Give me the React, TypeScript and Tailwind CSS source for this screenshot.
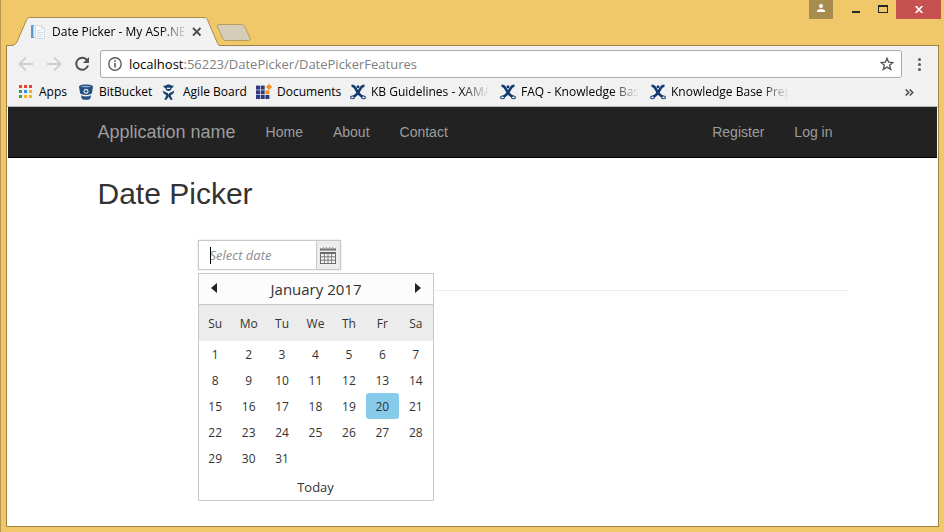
import { useState } from "react";
import type { ReactNode } from "react";

const UI = "font-['Open_Sans','Noto_Sans',sans-serif]";
const WEEKDAYS = ["Su", "Mo", "Tu", "We", "Th", "Fr", "Sa"];
const WEEKS = [0, 1, 2, 3, 4].map((w) =>
  [1, 2, 3, 4, 5, 6, 7].map((d) => w * 7 + d)
);

function AppsIcon() {
  const colors = ["#ea4335", "#ea4335", "#ea4335", "#34a065", "#2f8bf2", "#f7b30f", "#34a065", "#f7b30f", "#f7b30f"];
  return (
    <svg width="16" height="16" viewBox="0 0 16 16" aria-hidden="true">
      {colors.map((c, i) => (
        <rect key={i} x={1 + (i % 3) * 5} y={1 + Math.floor(i / 3) * 5} width="3" height="3" fill={c} />
      ))}
    </svg>
  );
}

function BucketIcon() {
  return (
    <svg width="16" height="16" viewBox="0 0 16 16" aria-hidden="true">
      <path d="M1 2.6C1 1.2 4 .4 8 .4s7 .8 7 2.2L13.9 9c-.1.8-2.600 2-5.900 2s-5.800-1.200-5.900-2z" fill="#205081" />
      <path d="M3 11.200c1.400.8 3 1.200 5 1.200s3.600-.4 5-1.200l-.6 3c-.3 1-2.200 1.600-4.400 1.600s-4.100-.6-4.400-1.600z" fill="#205081" />
      <ellipse cx="8" cy="2.500" rx="5" ry=".8" fill="#8fa8c0" />
      <circle cx="8" cy="7.300" r="2.500" fill="#dfe7ef" />
      <circle cx="8" cy="7.300" r="1.300" fill="#205081" />
    </svg>
  );
}

function AgileIcon() {
  return (
    <svg width="16" height="16" viewBox="0 0 16 16" aria-hidden="true">
      <path d="M1.200 1.500c1.800.5 2.700.2 3.200-.5.500-.7 3.700-.7 4.200 0 .5.700 1.400 1 3.200.5-.3 1.700-1.100 2.400-2.100 2.600C9.400 5.900 8.200 7 6.500 7S3.600 5.900 3.300 4.100c-1-.2-1.800-.9-2.100-2.600z" fill="#173f6d" />
      <path d="M4.700 4.300h3.600" stroke="#f1f1f1" strokeWidth="1.200" />
      <path d="M.8 6.800 6.500 9.400l5.700-2.600-.5 2.200L8.600 11.400l2.200 4.300H8.400L6.500 12.600 4.600 15.700H2.200l2.200-4.300L1.300 9z" fill="#173f6d" />
      <path d="M6.500 8v2.200" stroke="#f1f1f1" strokeWidth="1" />
    </svg>
  );
}

function DocumentsIcon() {
  return (
    <svg width="17" height="16" viewBox="0 0 17 16" aria-hidden="true">
      {[0, 1, 2].flatMap((r) =>
        [0, 1, 2].map((c) =>
          r === 0 && c === 2 ? null : (
            <rect key={`${r}${c}`} x={c * 4.700} y={1.600 + r * 4.700} width="4" height="4" fill={r === 1 && c === 2 ? "#f6931e" : "#2e3a80"} />
          )
        )
      )}
      <rect x="10.800" y=".8" width="4.400" height="4.400" fill="#f6931e" transform="rotate(45 13 3)" />
    </svg>
  );
}

function ConfluenceIcon() {
  return (
    <svg width="16" height="16" viewBox="0 0 16 16" aria-hidden="true">
      <path d="M1.500 1.800c2 0 2.900.6 4 2.700C7.200 7.800 9 11.600 13 12.800" fill="none" stroke="#123a6f" strokeWidth="2.600" />
      <path d="M14.500 1.800c-2 0-2.900.6-4 2.700C8.800 7.800 7 11.600 3 12.800" fill="none" stroke="#123a6f" strokeWidth="2.600" />
      <circle cx="8" cy="2.800" r="1.500" fill="#123a6f" />
      <ellipse cx="2.500" cy="13.400" rx="1.900" ry="1.400" fill="#f1f1f1" stroke="#123a6f" strokeWidth="1.100" />
      <ellipse cx="13.500" cy="13.400" rx="1.900" ry="1.400" fill="#f1f1f1" stroke="#123a6f" strokeWidth="1.100" />
    </svg>
  );
}

function PageIcon() {
  return (
    <svg width="16" height="16" viewBox="0 0 16 16" aria-hidden="true">
      <rect x="1" y="1" width="3" height="13" fill="#5b9bd0" />
      <rect x="3" y="2" width="1" height="11" fill="#a8d0ee" />
      <path d="M5.500 1.500h6l3 3v10h-9z" fill="#f8f9fb" stroke="#d3dae2" />
      <path d="M11.500 1.500v3h3" fill="none" stroke="#d3dae2" />
      <path d="M7 6.500h4M7 8.500h6M7 10.500h6M7 12.500h5" stroke="#d5dce4" />
    </svg>
  );
}

function CalendarIcon() {
  return (
    <svg width="16" height="17" viewBox="0 0 16 17" aria-hidden="true">
      <path d="M0 2.500h16" stroke="#6b6b6b" strokeWidth="2" />
      <path d="M3.500 0v3M6.500 0v3M9.500 0v3M12.500 0v3" stroke="#9a9a9a" />
      <rect x="0" y="5" width="16" height="12" fill="#6b6b6b" />
      {[0, 1, 2].flatMap((r) =>
        [0, 1, 2, 3].map((c) => (
          <rect key={`${r}${c}`} x={1 + c * 3.700} y={7 + r * 3.300} width="2.900" height="2.400" fill="#f6f6f6" />
        ))
      )}
    </svg>
  );
}

function Bookmark({ icon, width, fade = false, children }: { icon: ReactNode; width: string; fade?: boolean; children: ReactNode }) {
  return (
    <a href="#" className={`flex shrink-0 items-center gap-[5px] text-black ${width}`}>
      <span className="w-4 shrink-0">{icon}</span>
      <span
        className={`whitespace-nowrap ${
          fade ? "[mask-image:linear-gradient(to_right,black_90px,transparent_118px)]" : ""
        }`}
      >
        {children}
      </span>
    </a>
  );
}

function TitleBar() {
  return (
    <header className="flex h-[45px] items-start justify-between">
      <div className="flex items-start pt-[17px] pl-[3px]">
        <div className="relative z-10 flex h-[29px] w-[212px] items-center pr-[19px] pl-[21px]">
          <svg className="absolute inset-0" width="212" height="29" viewBox="0 0 212 29" aria-hidden="true">
            <path d="M0 29C4 29 6 28 8 25L17 4C18 1.500 19 .5 21 .5H195C197 .5 198 1.500 199 4L208 25C209 28 210 29 212 29Z" fill="#f1f1f1" />
            <path d="M0 28.500C4 28.500 6 28 8 25L17 4C18 1.500 19 .5 21 .5H195C197 .5 198 1.500 199 4L208 25C209 28 210 28.500 212 28.500" fill="none" stroke="#a98b4b" />
          </svg>
          <span className="relative"><PageIcon /></span>
          <span className="relative ml-[6px] w-[132px] text-xs whitespace-nowrap text-black [mask-image:linear-gradient(to_right,black_108px,transparent_136px)]">
            Date Picker - My ASP.NE
          </span>
          <button type="button" aria-label="Close tab" className="relative ml-2">
            <svg width="10" height="10" viewBox="0 0 10 10" aria-hidden="true">
              <path d="M1 1l7.500 7.500M8.500 1 1 8.500" stroke="#4d4d4d" strokeWidth="1.800" />
            </svg>
          </button>
        </div>
        <button type="button" aria-label="New tab" className="-ml-[5px] mt-[7px]">
          <svg width="36" height="18" viewBox="0 0 36 18" aria-hidden="true">
            <path d="M3 .5H25C27 .5 28 1 28.700 2.500L34 14c.6 1.700 0 2.500-1.500 2.500H10C8.500 16.500 7.500 16 6.800 14.500L1.500 3C.9 1.500 1.500.5 3 .5Z" fill="#d6cdb8" stroke="#b99c5e" />
          </svg>
        </button>
      </div>
      <div className="flex h-[19px] items-stretch pr-[3px]">
        <button type="button" aria-label="Profile" className="flex w-6 justify-center bg-[#a88c4d] pt-1">
          <svg width="8" height="8" viewBox="0 0 8 8" aria-hidden="true">
            <circle cx="4" cy="2" r="2" fill="#fff" />
            <path d="M0 8V6.500Q1 5 4 5t4 1.500V8z" fill="#fff" />
          </svg>
        </button>
        <button type="button" aria-label="Minimize" className="ml-[19px] flex w-[10px] items-start pt-[11px]">
          <span className="h-[2px] w-2 bg-[#262626]" />
        </button>
        <button type="button" aria-label="Maximize" className="ml-4 flex w-[18px] items-start pt-[5px]">
          <span className="h-2 w-[10px] border border-t-2 border-[#262626]" />
        </button>
        <button type="button" aria-label="Close" className="flex w-[45px] items-center justify-center bg-[#c75050]">
          <svg width="8" height="7" viewBox="0 0 8 7" aria-hidden="true">
            <path d="M.7 0 7.300 7M7.300 0 .7 7" stroke="#fff" strokeWidth="1.700" />
          </svg>
        </button>
      </div>
    </header>
  );
}

function Toolbar() {
  return (
    <div className="border-t border-[#a08245] bg-[#f1f1f1]">
      <div className="flex items-center pt-1 pr-4 pl-[11px]">
        <div className="flex w-[82px] gap-3">
          <button type="button" aria-label="Back">
            <svg width="16" height="16" viewBox="0 0 16 16" aria-hidden="true">
              <path d="M15 8H2M8 1.500 1.500 8 8 14.500" fill="none" stroke="#cfcfcf" strokeWidth="1.800" />
            </svg>
          </button>
          <button type="button" aria-label="Forward">
            <svg width="16" height="16" viewBox="0 0 16 16" aria-hidden="true">
              <path d="M1 8h13M8 1.500 14.500 8 8 14.500" fill="none" stroke="#cfcfcf" strokeWidth="1.800" />
            </svg>
          </button>
          <button type="button" aria-label="Reload">
            <svg width="16" height="16" viewBox="0 0 16 16" aria-hidden="true">
              <path d="M13.300 4.500A6 6 0 1 0 14 9.500" fill="none" stroke="#505050" strokeWidth="2" />
              <path d="M15 1v6H9z" fill="#505050" />
            </svg>
          </button>
        </div>
        <div className="flex h-7 flex-1 items-center rounded-[3px] border border-[#a9a9a9] bg-white px-[7px] text-[13px] text-black">
          <button type="button" aria-label="Site information">
            <svg width="14" height="14" viewBox="0 0 14 14" aria-hidden="true">
              <circle cx="7" cy="7" r="6.200" fill="none" stroke="#5a5a5a" strokeWidth="1.400" />
              <path d="M7 6v4.500M7 3.200v1.700" stroke="#5a5a5a" strokeWidth="1.600" />
            </svg>
          </button>
          <label htmlFor="address" className="ml-[7px] pt-[2px]">localhost</label>
          <input id="address" type="text" defaultValue=":56223/DatePicker/DatePickerFeatures" className="min-w-0 flex-1 pt-[2px] text-[#808080] outline-none" />
          <button type="button" aria-label="Bookmark this page">
            <svg width="14" height="14" viewBox="0 0 14 14" aria-hidden="true">
              <path d="M7 1.300 8.600 5.200l4.300.3-3.300 2.700 1.100 4.200L7 10.100l-3.700 2.300 1.100-4.200L1.100 5.500l4.300-.3z" fill="none" stroke="#5a5a5a" strokeWidth="1.400" />
            </svg>
          </button>
        </div>
        <button type="button" aria-label="Menu" className="ml-4 flex w-1 flex-col gap-[2px]">
          <span className="size-[3px] rounded-full bg-[#5a5a5a]" />
          <span className="size-[3px] rounded-full bg-[#5a5a5a]" />
          <span className="size-[3px] rounded-full bg-[#5a5a5a]" />
        </button>
      </div>
      <nav aria-label="Bookmarks" className="flex h-[29px] items-center border-b border-[#b4b8b6] pr-6 pl-[11px] text-xs">
        <Bookmark icon={<AppsIcon />} width="w-[60px]">Apps</Bookmark>
        <Bookmark icon={<BucketIcon />} width="w-[84px]">BitBucket</Bookmark>
        <Bookmark icon={<AgileIcon />} width="w-[94px]">Agile Board</Bookmark>
        <Bookmark icon={<DocumentsIcon />} width="w-[94px]">Documents</Bookmark>
        <Bookmark icon={<ConfluenceIcon />} width="w-[150px]" fade>KB Guidelines - XAMA</Bookmark>
        <Bookmark icon={<ConfluenceIcon />} width="w-[150px]" fade>FAQ - Knowledge Bas</Bookmark>
        <Bookmark icon={<ConfluenceIcon />} width="w-[150px]" fade>Knowledge Base Prepa</Bookmark>
        <button type="button" aria-label="More bookmarks" className="ml-auto">
          <svg width="9" height="7" viewBox="0 0 9 7" aria-hidden="true">
            <path d="M.7.5 3.700 3.500.7 6.500M4.700.5l3 3-3 3" fill="none" stroke="#505050" strokeWidth="1.600" />
          </svg>
        </button>
      </nav>
    </div>
  );
}

function NavBar() {
  return (
    <nav aria-label="Main" className="mx-px border-b border-black bg-[#222]">
      <div className="mx-auto flex h-[50px] max-w-[750px] items-center gap-[30px] text-sm text-[#9d9d9d]">
        <a href="#" className="text-lg">Application name</a>
        <a href="#">Home</a>
        <a href="#">About</a>
        <a href="#">Contact</a>
        <a href="#" className="ml-auto">Register</a>
        <a href="#" className="pr-[15px]">Log in</a>
      </div>
    </nav>
  );
}

function Calendar({ selected, onSelect }: { selected: number; onSelect: (day: number) => void }) {
  return (
    <div className="absolute top-full -left-px z-10 mt-1 w-[236px] border border-[#c8c8c8] bg-white text-[#333]">
      <div className="flex h-[31px] items-center justify-between border-b border-[#c8c8c8] bg-[#fcfcfc] pr-[11px] pl-3">
        <button type="button" aria-label="Previous month">
          <svg width="6" height="10" viewBox="0 0 6 10" className="mb-[2px]" aria-hidden="true"><path d="M6 0v10L0 5z" fill="#222" /></svg>
        </button>
        <span className="text-[15px]">January 2017</span>
        <button type="button" aria-label="Next month">
          <svg width="6" height="10" viewBox="0 0 6 10" className="mb-[2px]" aria-hidden="true"><path d="M0 0v10l6-5z" fill="#222" /></svg>
        </button>
      </div>
      <table className="w-full table-fixed text-center text-xs">
        <thead>
          <tr className="h-9 bg-[#ececec]">
            {WEEKDAYS.map((d) => (
              <th key={d} scope="col" className="pt-[2px] font-normal">{d}</th>
            ))}
          </tr>
        </thead>
        <tbody>
          {WEEKS.map((week) => (
            <tr key={week[0]} className="h-[26px]">
              {week.map((day) => (
                <td key={day} className="p-0">
                  {day <= 31 && (
                    <button
                      type="button"
                      onClick={() => onSelect(day)}
                      className={`block h-[26px] w-full pt-[2px] ${day === selected ? "rounded-[3px] bg-[#86cbea]" : ""}`}
                    >
                      {day}
                    </button>
                  )}
                </td>
              ))}
            </tr>
          ))}
        </tbody>
      </table>
      <button type="button" onClick={() => onSelect(20)} className="block h-[29px] w-full pt-1 text-[13px]">
        Today
      </button>
    </div>
  );
}

export default function App() {
  const [day, setDay] = useState(20);
  return (
    <div className={`flex min-h-screen flex-col border-l border-[#b8974f] bg-[#f0c869] pr-[5px] pb-[5px] pl-[5px] text-black ${UI}`}>
      <div className="-mr-[5px]"><TitleBar /></div>
      <div className="flex flex-1 flex-col border-x border-b border-[#a08245] bg-white">
        <Toolbar />
        <main className="font-['Liberation_Sans',Arial,sans-serif]">
          <NavBar />
          <div className="mx-auto max-w-[750px]">
            <h2 className="mt-[19px] text-[30px] leading-[33px] text-[#333]">Date Picker</h2>
            <div className={`mt-[30px] ml-[100px] ${UI}`}>
              <div className="relative flex h-[30px] w-[143px] border border-[#c8c8c8] bg-white shadow-[0_0_2px_#ddd]">
                <input
                  type="text"
                  aria-label="Date"
                  placeholder="Select date"
                  className="min-w-0 flex-1 pt-[2px] pl-[11px] text-[13px] italic outline-none placeholder:text-[#8c8c8c]"
                />
                <span className="absolute top-[6px] left-[11px] h-[17px] w-px bg-black" />
                <button type="button" aria-label="Open calendar" className="flex w-6 items-center justify-center border-l border-[#c8c8c8] bg-[#ececec]">
                  <CalendarIcon />
                </button>
                <Calendar selected={day} onSelect={setDay} />
              </div>
              <hr className="mt-5 border-[#eee]" />
            </div>
          </div>
        </main>
      </div>
    </div>
  );
}
